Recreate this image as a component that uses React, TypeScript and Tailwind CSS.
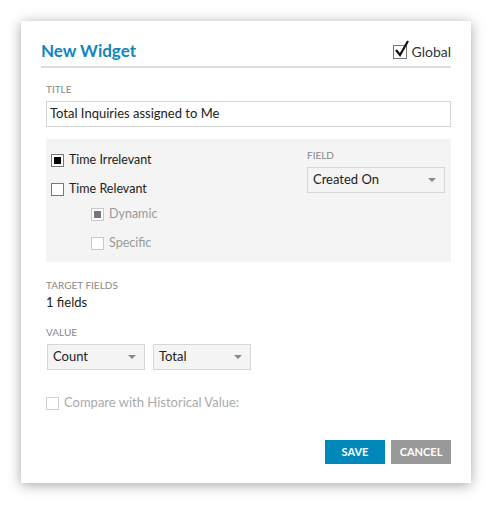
function Caret() {
    return (
        <svg width="8" height="4" viewBox="0 0 8 4" className="shrink-0">
            <path d="M0 0 L8 0 L4 4 Z" fill="#888" />
        </svg>
    )
}

function Select({ label, className }: { label: string; className: string }) {
    return (
        <div
            className={`flex items-center justify-between border border-[#d6d6d6] bg-[#f4f4f4] pl-[5px] pr-[8px] text-[13px] text-[#222] ${className}`}
        >
            <span>{label}</span>
            <Caret />
        </div>
    )
}

function Box({ state, muted }: { state: "on" | "off"; muted?: boolean }) {
    return (
        <span
            className={`flex h-[13px] w-[13px] items-center justify-center border bg-white ${
                muted ? "border-[#c8c8c8]" : "border-[#777]"
            }`}
        >
            {state === "on" && (
                <span className={`h-[7px] w-[7px] ${muted ? "bg-[#777]" : "bg-black"}`} />
            )}
        </span>
    )
}

export default function App() {
    return (
        <div
            className="min-h-screen bg-white pl-[21px] pt-[21px]"
            style={{ fontFamily: "Lato, 'Open Sans', sans-serif" }}
        >
            <div className="h-[462px] w-[450px] bg-white px-[20px] pt-[20px] shadow-[0_2px_12px_rgba(0,0,0,0.35)]">
                <div className="flex items-end justify-between border-b-2 border-[#dcdcdc] pb-[5px]">
                    <h1 className="text-[17px] font-bold leading-[20px] text-[#1186bd]">New Widget</h1>
                    <label className="flex items-center gap-[4px] text-[14px] leading-[18px] text-[#333]">
                        <span className="relative h-[14px] w-[14px] border border-[#777] bg-white">
                            <svg
                                width="16"
                                height="18"
                                viewBox="0 0 16 18"
                                className="absolute left-[0px] top-[-6px]"
                            >
                                <path d="M2 10 L6 15 L14 1" fill="none" stroke="#111" strokeWidth="2.2" />
                            </svg>
                        </span>
                        Global
                    </label>
                </div>

                <div className="pl-[5px]">
                    <div className="mt-[15px] text-[10px] leading-[12px] text-[#888]">TITLE</div>
                    <div className="mt-[6px] flex h-[26px] items-center border border-[#d6d6d6] px-[3px] text-[13px] text-[#222]">
                        Total Inquiries assigned to Me
                    </div>

                    <div className="mt-[12px] flex h-[123px] bg-[#f4f4f4] px-[5px] pt-[15px]">
                        <div className="flex w-[256px] flex-col text-[12.5px] text-[#222]">
                            <div className="flex h-[13px] items-center gap-[5px]">
                                <Box state="on" />
                                <span>Time Irrelevant</span>
                            </div>
                            <div className="mt-[16px] flex h-[13px] items-center gap-[5px]">
                                <Box state="off" />
                                <span>Time Relevant</span>
                            </div>
                            <div className="ml-[40px] mt-[12px] flex h-[13px] items-center gap-[5px] text-[#999]">
                                <Box state="on" muted />
                                <span>Dynamic</span>
                            </div>
                            <div className="ml-[40px] mt-[16px] flex h-[13px] items-center gap-[5px] text-[#999]">
                                <Box state="off" muted />
                                <span>Specific</span>
                            </div>
                        </div>
                        <div className="flex flex-col">
                            <div className="mt-[-5px] text-[10px] leading-[12px] text-[#888]">FIELD</div>
                            <Select label="Created On" className="mt-[6px] h-[26px] w-[138px]" />
                        </div>
                    </div>

                    <div className="mt-[17px] text-[10px] leading-[12px] text-[#888]">TARGET FIELDS</div>
                    <div className="mt-[3px] text-[13px] leading-[16px] text-[#222]">1 fields</div>

                    <div className="mt-[16px] text-[10px] leading-[12px] text-[#888]">VALUE</div>
                    <div className="mt-[6px] flex gap-[8px] pl-[1px]">
                        <Select label="Count" className="h-[26px] w-[98px]" />
                        <Select label="Total" className="h-[26px] w-[98px]" />
                    </div>

                    <div className="mt-[26px] flex h-[14px] items-center gap-[5px] text-[13px] text-[#aaa]">
                        <span className="h-[13px] w-[13px] border border-[#d0d0d0] bg-white" />
                        <span>Compare with Historical Value:</span>
                    </div>

                    <div className="mt-[30px] flex justify-end gap-[6px]">
                        <button className="h-[24px] w-[60px] bg-[#0088bb] text-[11px] font-bold text-white">
                            SAVE
                        </button>
                        <button className="h-[24px] w-[60px] bg-[#999] text-[11px] font-bold text-white">
                            CANCEL
                        </button>
                    </div>
                </div>
            </div>
        </div>
    )
}
